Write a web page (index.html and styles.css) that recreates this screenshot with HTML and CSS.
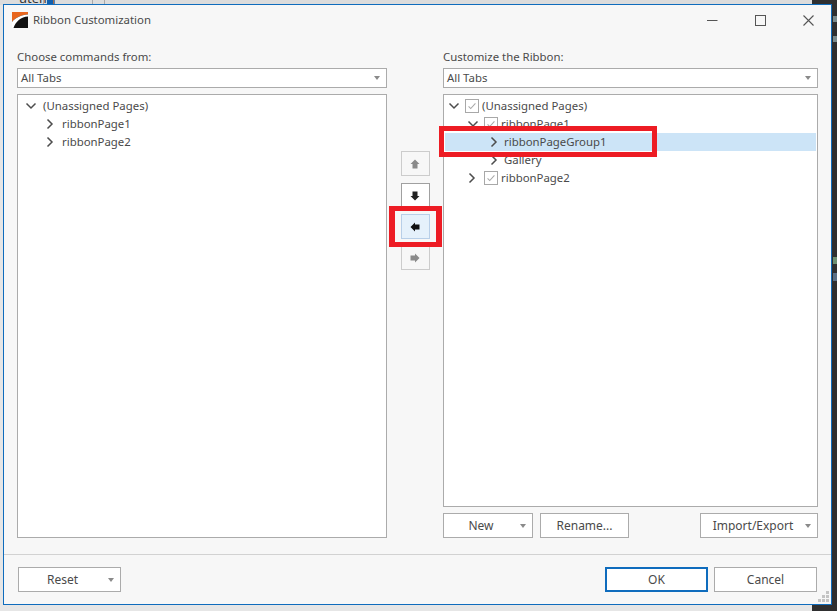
FILE: index.html
```html
<!DOCTYPE html>
<html lang="en">
<head>
<meta charset="utf-8">
<title>Ribbon Customization</title>
<link rel="stylesheet" href="styles.css">
</head>
<body>
<svg width="0" height="0" class="defs">
  <symbol id="right" viewBox="0 0 10 12"><path d="M2.5 1.5 7 6 2.5 10.5" fill="none" stroke="#4d4d4d" stroke-width="1.5"/></symbol>
  <symbol id="down" viewBox="0 0 12 10"><path d="M1.5 2.5 6 7 10.5 2.5" fill="none" stroke="#4d4d4d" stroke-width="1.5"/></symbol>
  <symbol id="check" viewBox="0 0 14 14"><path d="M3 7.5 5.5 10 11 4" fill="none" stroke="#a8a8a8" stroke-width="1.2"/></symbol>
</svg>
<div class="backdrop-top">
  <span class="bg-text">utem]</span><span class="bg-line bg-l1"></span><span class="bg-blue"></span><span class="bg-line bg-l2"></span><span class="bg-line bg-l3"></span>
</div>
<div class="backdrop-dark">
  <span class="frag frag-a"></span><span class="frag frag-b"></span><span class="frag frag-c"></span><span class="frag frag-d"></span>
</div>
<div class="window">
  <header class="titlebar">
    <svg class="logo" width="16" height="16" viewBox="0 0 16 16">
      <rect width="16" height="16" fill="#111"/>
      <path d="M0 0H16V2.5C9 3 3 6 0 10Z" fill="#e8661e"/>
      <path d="M0 10C3 6 9 3 16 2.5V4.5C9 5 4 9 1.5 16H0Z" fill="#fff"/>
    </svg>
    <span class="title">Ribbon Customization</span>
    <div class="winbtns">
      <svg width="11" height="11" viewBox="0 0 11 11"><path d="M0 5.5H10.5" stroke="#555" stroke-width="1"/></svg>
      <svg width="11" height="11" viewBox="0 0 11 11"><rect x="0.5" y="0.5" width="10" height="10" fill="none" stroke="#555"/></svg>
      <svg width="11" height="11" viewBox="0 0 11 11"><path d="M0.5 0.5 10.5 10.5M10.5 0.5 0.5 10.5" stroke="#555" stroke-width="1.1"/></svg>
    </div>
  </header>

  <main class="main">
    <section class="col">
      <label class="lbl">Choose commands from:</label>
      <div class="combo"><span>All Tabs</span><i class="caret"></i></div>
      <div class="tree tree-full">
        <div class="row ind-l1"><svg class="chev-d"><use href="#down"/></svg><span class="t">(Unassigned Pages)</span></div>
        <div class="row ind-l2"><svg class="chev-r"><use href="#right"/></svg><span class="t">ribbonPage1</span></div>
        <div class="row ind-l2"><svg class="chev-r"><use href="#right"/></svg><span class="t">ribbonPage2</span></div>
      </div>
    </section>

    <section class="movers">
      <button class="mv mv-off mv-first"><svg width="12" height="12" viewBox="0 0 12 12"><path d="M6 1.5 10.5 6H8.5V10.5H3.5V6H1.5Z" fill="#8a8a8a"/></svg></button>
      <button class="mv mv-on"><svg width="12" height="12" viewBox="0 0 12 12"><path d="M6 10.5 10.5 6H8.5V1.5H3.5V6H1.5Z" fill="#222"/></svg></button>
      <button class="mv mv-hot"><svg width="12" height="12" viewBox="0 0 12 12"><path d="M1.5 6 6 1.5V3.5H10.5V8.5H6V10.5Z" fill="#111"/></svg></button>
      <button class="mv mv-off"><svg width="12" height="12" viewBox="0 0 12 12"><path d="M10.5 6 6 1.5V3.5H1.5V8.5H6V10.5Z" fill="#8a8a8a"/></svg></button>
    </section>

    <section class="col">
      <label class="lbl">Customize the Ribbon:</label>
      <div class="combo"><span>All Tabs</span><i class="caret"></i></div>
      <div class="tree tree-short">
        <div class="row ind-r1"><svg class="chev-d"><use href="#down"/></svg><svg class="cb"><use href="#check"/></svg><span class="t t-cb">(Unassigned Pages)</span></div>
        <div class="row ind-r2"><svg class="chev-d"><use href="#down"/></svg><svg class="cb"><use href="#check"/></svg><span class="t t-cb2">ribbonPage1</span></div>
        <div class="row row-sel ind-r3"><svg class="chev-r"><use href="#right"/></svg><span class="t t-g">ribbonPageGroup1</span></div>
        <div class="row ind-r3"><svg class="chev-r"><use href="#right"/></svg><span class="t t-g">Gallery</span></div>
        <div class="row ind-r2"><svg class="chev-r"><use href="#right"/></svg><svg class="cb"><use href="#check"/></svg><span class="t t-cb2">ribbonPage2</span></div>
      </div>
      <div class="toolrow">
        <button class="btn btn-new"><span>New</span><i class="caret"></i></button>
        <button class="btn btn-rename">Rename...</button>
        <button class="btn btn-import"><span>Import/Export</span><i class="caret"></i></button>
      </div>
    </section>
  </main>

  <footer class="footer">
    <button class="btn btn-reset"><span>Reset</span><i class="caret"></i></button>
    <div class="actions">
      <button class="btn btn-dlg btn-ok">OK</button>
      <button class="btn btn-dlg">Cancel</button>
    </div>
  </footer>
  <svg class="grip" width="12" height="12" viewBox="0 0 12 12"><path d="M8 0h3v3H8zM4 4h3v3H4zM8 4h3v3H8zM0 8h3v3H0zM4 8h3v3H4zM8 8h3v3H8z" fill="#c4c4c4"/></svg>
</div>
<div class="mark mark-row"></div>
<div class="mark mark-btn"></div>
</body>
</html>
```
FILE: styles.css
```css
* { box-sizing: border-box; }
html, body { margin: 0; height: 100%; }
body {
  position: relative;
  width: 837px;
  height: 611px;
  overflow: hidden;
  background: #e6e6e6;
  font: 11.4px/16px "Noto Sans", "Open Sans", sans-serif;
  color: #4a4a4a;
}
.defs { position: absolute; }

.backdrop-top {
  position: absolute; left: 0; top: 0; width: 812px; height: 5px;
  background: #dcdcdc; overflow: hidden;
}
.bg-text { position: absolute; left: 19px; top: -10px; color: #333; font-size: 13px; }
.bg-line { position: absolute; top: 0; width: 1px; height: 5px; background: #a8a8a8; }
.bg-l1 { left: 43px; }
.bg-l2 { left: 92px; }
.bg-l3 { left: 104px; }
.bg-blue { position: absolute; left: 47px; top: 0; width: 6px; height: 4px; background: #1060b0; }
.backdrop-dark { position: absolute; left: 812px; top: 0; width: 25px; height: 611px; background: #2f2f30; }
.frag { position: absolute; left: 21px; width: 4px; }
.frag-a { top: 16px; height: 6px; background: #7a8a8c; }
.frag-b { top: 36px; height: 6px; background: #7a8a8c; }
.frag-c { top: 257px; height: 7px; background: #6d8f72; }
.frag-d { top: 273px; height: 8px; background: #5b6f85; }

.window {
  position: absolute; left: 3px; top: 4px; width: 829px; height: 601px;
  background: #f7f7f7;
  border: 1px solid #0f6cbd;
  display: flex; flex-direction: column;
}
.titlebar { height: 30px; flex: none; display: flex; align-items: center; padding-left: 8px; margin-bottom: 1px; }
.title { margin-left: 5px; }
.winbtns { margin-left: auto; display: flex; gap: 37px; padding-right: 17px; }

.main { flex: 1; display: flex; padding: 9px 0 0 13px; align-items: flex-start; }
.col { display: flex; flex-direction: column; }
.col:first-child { width: 370px; }
.col:last-child { width: 375px; }
.lbl { height: 23px; line-height: 23px; }
.combo {
  height: 20px; background: #fff; border: 1px solid #ababab;
  display: flex; align-items: center; justify-content: space-between;
  padding: 0 6px 0 3px;
}
.caret {
  display: block; width: 0; height: 0;
  border-left: 3.5px solid transparent; border-right: 3.5px solid transparent;
  border-top: 4px solid #8a8a8a;
}

.tree { margin-top: 6px; background: #fff; border: 1px solid #ababab; padding-top: 2px; }
.tree-full { height: 444px; }
.tree-short { height: 413px; }
.row { height: 18px; display: flex; align-items: center; white-space: nowrap; }
.row-sel { background: #cce4f7; margin: 0 1px; }
.chev-d { width: 12px; height: 10px; flex: none; }
.chev-r { width: 10px; height: 12px; flex: none; }
.cb {
  width: 14px; height: 14px; flex: none; margin-left: 5px;
  border: 1px solid #a8a8a8; background: #fff;
}
.t { margin-left: 6px; margin-bottom: 1px; }
.ind-l2 .t { margin-left: 7px; }
.t-cb { margin-left: 3px; }
.t-cb2 { margin-left: 3px; }
.t-g { margin-left: 5px; }
.ind-l1 { padding-left: 7px; }
.ind-l2 { padding-left: 27px; }
.ind-r1 { padding-left: 4px; }
.ind-r2 { padding-left: 23px; }
.ind-r3 { padding-left: 45px; }
.row-sel.ind-r3 { padding-left: 44px; }
.ind-r2 .chev-r + .cb { margin-left: 7px; }

.movers { width: 56px; display: flex; flex-direction: column; align-items: center; padding-top: 106px; gap: 6px; }
.mv {
  width: 29px; height: 25px; padding: 0; border: 1px solid #ccc; background: #f7f7f7;
  display: flex; align-items: center; justify-content: center;
}
.mv-first { margin-bottom: 1px; }
.mv-on { border-color: #a0a0a0; background: #fff; }
.mv-hot { border-color: #b8cfe8; background: #e5f1fb; }

.btn {
  font: 12px/16px "Noto Sans", "Open Sans", sans-serif;
  color: inherit; background: #fff; border: 1px solid #ababab;
  height: 25px; padding: 0; display: flex; align-items: center; justify-content: center;
  position: relative;
}
.toolrow { display: flex; margin-top: 6px; gap: 7px; }
.btn-new { width: 90px; }
.btn-new span { margin-right: 14px; }
.btn-rename { width: 89px; }
.btn-import { width: 118px; margin-left: auto; }
.btn-import span { margin-right: 12px; }
.btn .caret { position: absolute; right: 6px; top: 10px; }

.footer {
  height: 50px; flex: none; border-top: 1px solid #d2d2d2;
  display: flex; justify-content: space-between; align-items: flex-start;
  padding: 12px 14px 0 14px;
}
.btn-reset { width: 103px; }
.btn-reset span { margin-right: 14px; }
.actions { display: flex; gap: 6px; }
.btn-dlg { width: 103px; }
.btn-ok { border: 2px solid #0f6cbd; }
.grip { position: absolute; right: 1px; bottom: 1px; }

.mark { position: absolute; border-style: solid; border-color: #ed1c24; }
.mark-row { left: 439px; top: 126px; width: 218px; height: 31px; border-width: 5px; }
.mark-btn { left: 389px; top: 206px; width: 53px; height: 41px; border-width: 5px 6px; }
```
